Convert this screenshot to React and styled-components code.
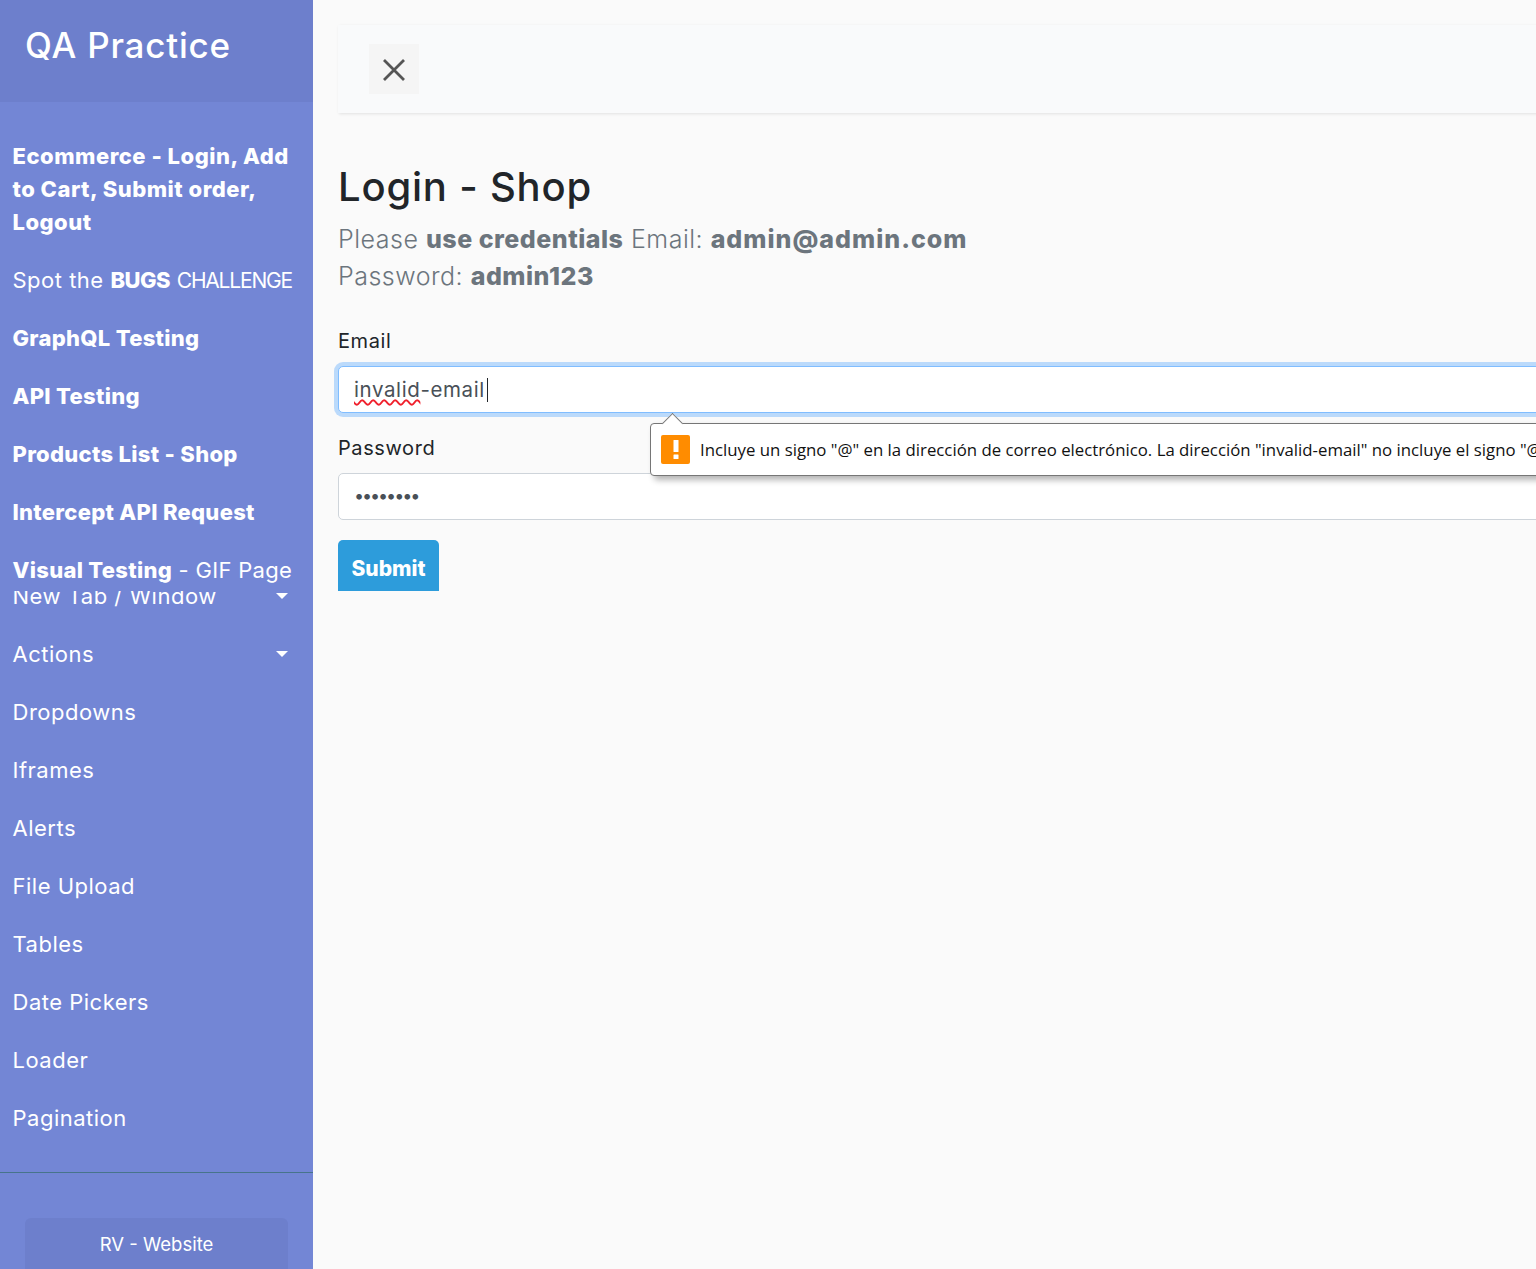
import React from 'react';
import styled, { createGlobalStyle } from 'styled-components';

const GlobalStyle = createGlobalStyle`
  html, body {
    margin: 0;
    height: 100%;
    overflow: hidden;
    background: #fafafa;
  }
  * {
    box-sizing: border-box;
  }
  body {
    font-family: "Inter", "Noto Sans", sans-serif;
    color: #212529;
  }
`;

const Wrapper = styled.div`
  display: flex;
  align-items: stretch;
  width: 1536px;
  height: 1269px;
  overflow: hidden;
`;

const Sidebar = styled.nav`
  flex: 0 0 313px;
  min-width: 0;
  background: #7386d5;
  color: #fff;
`;

const SidebarHeader = styled.div`
  height: 102px;
  padding: 25px 25px 0;
  background: #6d7fcc;
`;

const Brand = styled.h3`
  margin: 0;
  font-size: 35px;
  line-height: 40px;
  font-weight: 500;
  letter-spacing: 0.8px;
`;

const Menu = styled.ul`
  list-style: none;
  margin: 0;
  padding: 25px 0 25px;
  border-bottom: 1px solid #47748b;
`;

const MenuItem = styled.li`
  position: relative;
  display: flex;
  justify-content: space-between;
  align-items: center;
  padding: 12.5px 13px 12.5px 12.5px;
  font-size: 22px;
  line-height: 33px;
  font-weight: 400;
  white-space: nowrap;
  letter-spacing: 0.5px;
  b {
    font-weight: 800;
    letter-spacing: 0.3px;
  }
`;

const StackedItem = styled(MenuItem)`
  display: block;
  white-space: normal;
  font-weight: 800;
  letter-spacing: 0.5px;
`;

const SpotItem = styled(MenuItem)`
  b {
    letter-spacing: -0.5px;
  }
`;

const NarrowCaps = styled.span`
  font-size: 21px;
  letter-spacing: -1.2px;
`;

/* this row hides the top of the one that slides under it */
const CoverItem = styled(MenuItem)`
  z-index: 1;
  height: 50px;
  padding-bottom: 4.5px;
  background: #7386d5;
  justify-content: flex-start;
  letter-spacing: 0.3px;
`;

const PulledItem = styled(MenuItem)`
  margin-top: -24px;
`;

const Caret = styled.span`
  width: 0;
  height: 0;
  margin-right: 12px;
  border-top: 6px solid #fff;
  border-left: 6px solid transparent;
  border-right: 6px solid transparent;
`;

const CtaBlock = styled.div`
  padding: 45px 25px 0;
`;

const CtaLink = styled.a`
  display: block;
  height: 70px;
  padding-top: 10px;
  border-radius: 6px;
  background: #6d7fcc;
  color: #fff;
  font-size: 18.5px;
  line-height: 33px;
  text-align: center;
`;

const Content = styled.main`
  flex: 0 0 1400px;
  padding: 25px;
`;

const TopBar = styled.div`
  display: flex;
  align-items: center;
  height: 88px;
  padding-left: 31px;
  margin-bottom: 50px;
  background: #f9fafb;
  box-shadow: 1px 1px 3px rgba(0, 0, 0, 0.1);
`;

const CloseButton = styled.button`
  display: flex;
  align-items: center;
  justify-content: center;
  width: 50px;
  height: 50px;
  padding: 2px 0 0;
  border: 0;
  background: #f5f5f5;
  color: #555;
`;

const Title = styled.h1`
  margin: 0 0 10px;
  font-size: 40px;
  line-height: 48px;
  font-weight: 500;
  letter-spacing: 0.8px;
  color: #212529;
`;

const Lead = styled.p`
  margin: 0 0 31px;
  width: 660px;
  font-size: 25px;
  line-height: 37px;
  font-weight: 300;
  letter-spacing: 0.5px;
  color: #6c757d;
`;

const Strong = styled.b`
  font-weight: 800;
  letter-spacing: ${(props) => props.$spacing}px;
`;

const Field = styled.div`
  position: relative;
  margin-bottom: 20px;
`;

const Label = styled.label`
  display: block;
  margin-bottom: 10px;
  font-size: 20px;
  line-height: 30px;
  letter-spacing: 0.6px;
`;

const TextBox = styled.div`
  display: flex;
  align-items: center;
  height: 47px;
  padding: 0 15px;
  border: 1px solid #ced4da;
  border-radius: 5px;
  background: #fff;
  font-size: 20.5px;
  letter-spacing: 0.6px;
  color: #495057;
`;

const FocusedBox = styled(TextBox)`
  border-color: #80bdff;
  box-shadow: 0 0 0 4px rgba(0, 123, 255, 0.25);
`;

const Squiggle = styled.span`
  text-decoration: underline wavy #f0202c 1.5px;
  text-underline-offset: 2px;
`;

const TextCaret = styled.span`
  display: inline-block;
  width: 1px;
  height: 24px;
  margin-left: 2px;
  background: #212529;
`;

const Dots = styled.span`
  padding-bottom: 2px;
  font-size: 18px;
  letter-spacing: -2.1px;
`;

const SubmitButton = styled.button`
  width: 101px;
  height: 51px;
  padding: 5px 0 0;
  border: 0;
  border-radius: 5px 5px 0 0;
  background: #2d9cdb;
  color: #fff;
  font-family: inherit;
  font-size: 21px;
  font-weight: 800;
`;

const Bubble = styled.div`
  position: absolute;
  left: 312px;
  top: 97px;
  z-index: 3;
  display: flex;
  align-items: center;
  gap: 10px;
  width: 960px;
  height: 53px;
  padding: 0 10px;
  border: 1px solid #767676;
  border-radius: 4px;
  background: #fff;
  box-shadow: 4px 4px 6px rgba(0, 0, 0, 0.3);
  font-family: "Open Sans", "Noto Sans", sans-serif;
  font-size: 16.8px;
  white-space: nowrap;
  color: #111;
  &::before {
    content: '';
    position: absolute;
    left: 14px;
    top: -8px;
    width: 14px;
    height: 14px;
    border-top: 1px solid #767676;
    border-left: 1px solid #767676;
    background: #fff;
    transform: rotate(45deg);
  }
`;

const WarnIcon = styled.span`
  flex: 0 0 29px;
  display: flex;
  align-items: center;
  justify-content: center;
  width: 29px;
  height: 29px;
  border-radius: 2px;
  background: #ff8c00;
`;

const menuItems = ['Dropdowns', 'Iframes', 'Alerts', 'File Upload', 'Tables', 'Date Pickers', 'Loader', 'Pagination'];

export default function App() {
  return (
    <Wrapper>
      <GlobalStyle />
      <Sidebar>
        <SidebarHeader>
          <Brand>QA Practice</Brand>
        </SidebarHeader>
        <Menu>
          <StackedItem>Ecommerce - Login, Add to Cart, Submit order, Logout</StackedItem>
          <SpotItem>
            <span>Spot the <b>BUGS</b> <NarrowCaps>CHALLENGE</NarrowCaps></span>
          </SpotItem>
          <MenuItem><b>GraphQL Testing</b></MenuItem>
          <MenuItem><b>API Testing</b></MenuItem>
          <MenuItem><b>Products List - Shop</b></MenuItem>
          <MenuItem><b>Intercept API Request</b></MenuItem>
          <CoverItem>
            <span><b>Visual Testing</b> - GIF Page</span>
          </CoverItem>
          <PulledItem>
            New Tab / Window
            <Caret />
          </PulledItem>
          <MenuItem>
            Actions
            <Caret />
          </MenuItem>
          {menuItems.map((item) => (
            <MenuItem key={item}>{item}</MenuItem>
          ))}
        </Menu>
        <CtaBlock>
          <CtaLink>RV - Website</CtaLink>
        </CtaBlock>
      </Sidebar>

      <Content>
        <TopBar>
          <CloseButton aria-label="Toggle sidebar">
            <svg width="24" height="24" viewBox="0 0 24 24" fill="none" stroke="currentColor" strokeWidth="2.8">
              <path d="M2 2 22 22M22 2 2 22" />
            </svg>
          </CloseButton>
        </TopBar>

        <Title>Login - Shop</Title>
        <Lead>
          Please <Strong $spacing={0.5}>use credentials</Strong> Email: <Strong $spacing={1}>admin@admin.com</Strong> Password: <Strong $spacing={0.5}>admin123</Strong>
        </Lead>

        <Field>
          <Label>Email</Label>
          <FocusedBox>
            <Squiggle>invalid</Squiggle>-email
            <TextCaret />
          </FocusedBox>
          <Bubble>
            <WarnIcon>
              <svg width="6" height="19" viewBox="0 0 6 19" fill="#fff">
                <rect x="0.5" y="0" width="5" height="12" rx="0.5" />
                <rect x="0.5" y="14.5" width="5" height="4.5" rx="0.5" />
              </svg>
            </WarnIcon>
            Incluye un signo "@" en la dirección de correo electrónico. La dirección "invalid-email" no incluye el signo "@".
          </Bubble>
        </Field>

        <Field>
          <Label>Password</Label>
          <TextBox>
            <Dots>••••••••</Dots>
          </TextBox>
        </Field>

        <SubmitButton>Submit</SubmitButton>
      </Content>
    </Wrapper>
  );
}
